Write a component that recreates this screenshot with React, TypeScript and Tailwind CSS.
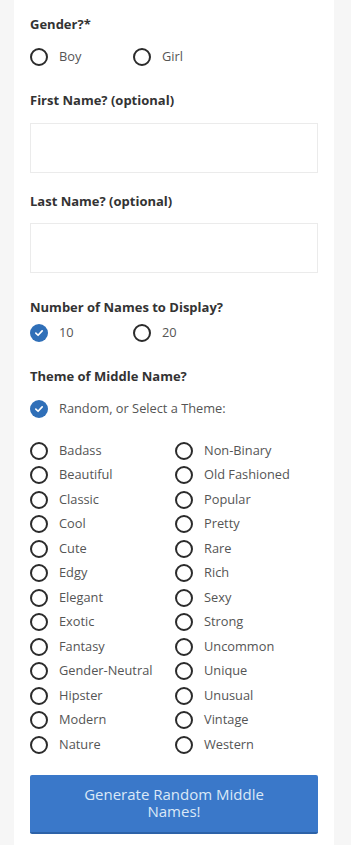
const left = [
  "Badass",
  "Beautiful",
  "Classic",
  "Cool",
  "Cute",
  "Edgy",
  "Elegant",
  "Exotic",
  "Fantasy",
  "Gender-Neutral",
  "Hipster",
  "Modern",
  "Nature",
];
const right = [
  "Non-Binary",
  "Old Fashioned",
  "Popular",
  "Pretty",
  "Rare",
  "Rich",
  "Sexy",
  "Strong",
  "Uncommon",
  "Unique",
  "Unusual",
  "Vintage",
  "Western",
];

function Circle() {
  return (
    <span className="h-[18px] w-[18px] shrink-0 rounded-full border-2 border-[#2b2b2b] bg-white" />
  );
}

function Checked() {
  return (
    <span className="flex h-[18px] w-[18px] shrink-0 items-center justify-center rounded-full bg-[#2f6fb8]">
      <svg viewBox="0 0 12 12" className="h-[10px] w-[10px]" fill="none">
        <path
          d="M2.2 6.2 L4.9 8.7 L9.8 3.4"
          stroke="white"
          strokeWidth="2"
          strokeLinecap="round"
          strokeLinejoin="round"
        />
      </svg>
    </span>
  );
}

function Option({ label, checked = false, width }: { label: string; checked?: boolean; width?: string }) {
  return (
    <div className={`flex h-[18px] items-center gap-[11px] ${width ?? ""}`}>
      {checked ? <Checked /> : <Circle />}
      <span className="text-[12.8px] text-[#555]">{label}</span>
    </div>
  );
}

function Label({ children }: { children: React.ReactNode }) {
  return <div className="text-[13px] font-bold text-[#333]">{children}</div>;
}

export default function App() {
  return (
    <div className="min-h-[845px] bg-[#f6f6f6] pl-[14px] pr-[17px] [font-family:'Open_Sans',sans-serif]">
      <div className="bg-white px-4 pt-[15px] pb-[11px]">
        <Label>Gender?*</Label>
        <div className="mt-[13px] flex">
          <Option label="Boy" width="w-[103px]" />
          <Option label="Girl" />
        </div>

        <div className="mt-[25px]">
          <Label>First Name? (optional)</Label>
        </div>
        <div className="mt-[13px] h-[50px] border border-[#ebebeb]" />

        <div className="mt-[19px]">
          <Label>Last Name? (optional)</Label>
        </div>
        <div className="mt-[11px] h-[50px] border border-[#ebebeb]" />

        <div className="mt-[25px]">
          <Label>Number of Names to Display?</Label>
        </div>
        <div className="mt-[7px] flex">
          <Option label="10" checked width="w-[103px]" />
          <Option label="20" />
        </div>

        <div className="mt-[25px]">
          <Label>Theme of Middle Name?</Label>
        </div>
        <div className="mt-[13px]">
          <Option label="Random, or Select a Theme:" checked />
        </div>

        <div className="mt-[24px] flex">
          <div className="flex w-[145px] flex-col gap-[6.5px]">
            {left.map((t) => (
              <Option key={t} label={t} />
            ))}
          </div>
          <div className="flex flex-col gap-[6.5px]">
            {right.map((t) => (
              <Option key={t} label={t} />
            ))}
          </div>
        </div>

        <button className="mt-[21px] flex h-[59px] w-full items-center justify-center rounded-[2px] border-b-2 border-[#2c62a8] bg-[#3a78c9] px-10 text-center text-[15px] leading-[17px] text-[#dbe8f7]">
          Generate Random Middle Names!
        </button>
      </div>
    </div>
  );
}
